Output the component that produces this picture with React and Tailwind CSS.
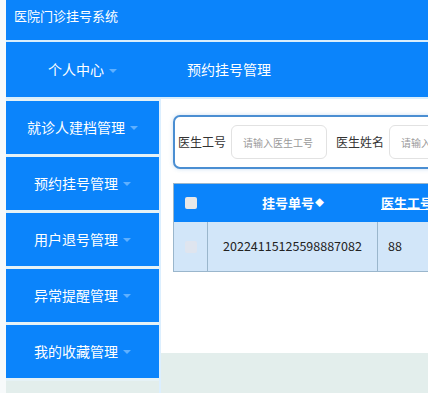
import React from 'react';

const font = { fontFamily: '"Microsoft YaHei", "Noto Sans CJK SC", "Noto Sans", sans-serif' };

const Caret = () => (
  <span className="ml-[5px] inline-block w-0 h-0 border-l-[4px] border-r-[4px] border-t-[4px] border-l-transparent border-r-transparent border-t-[#5fb0ff] align-middle" />
);

const menus = ['就诊人建档管理', '预约挂号管理', '用户退号管理', '异常提醒管理', '我的收藏管理'];

export default function App() {
  return (
    <div className="w-[428px] h-[393px] overflow-hidden flex bg-[#f4f8f9]" style={font}>
      {/* faint strip on the left edge */}
      <div className="w-[6px] shrink-0 bg-[#f7fafb]" />

      <div className="flex-1 flex flex-col bg-[#d9eefc] gap-[2px]">
        <div className="h-[40px] shrink-0 bg-[#0b84fb] pl-[8px] pt-[6px] text-white text-[13px]">
          医院门诊挂号系统
        </div>

        <div className="h-[55px] shrink-0 bg-[#0b84fb] flex items-center text-white text-[14px]">
          <div className="w-[153px] text-center">
            个人中心<Caret />
          </div>
          <div className="ml-[28px]">预约挂号管理</div>
        </div>

        <div className="flex-1 flex min-h-0">
          <div className="w-[153px] shrink-0 flex flex-col gap-[3px] pt-[2px] bg-[#e6f2f6]">
            {menus.map((m) => (
              <div key={m} className="h-[53px] shrink-0 bg-[#0b84fb] flex items-center justify-center text-white text-[14px]">
                {m}<Caret />
              </div>
            ))}
            <div className="flex-1 bg-[#e3eeec]" />
          </div>

          <div className="flex-1 flex flex-col bg-white border-l-2 border-[#dcefff] min-w-0">
            <div className="flex-1 pl-[12px] pt-[16px] overflow-hidden">
              <div className="h-[54px] w-[300px] border-2 border-[#4a8ed2] rounded-[7px] bg-white flex items-center pl-[3px] shadow-[0_0_4px_rgba(74,142,210,0.3)]">
                <span className="text-[12px] text-[#333] whitespace-nowrap">医生工号</span>
                <div className="ml-[5px] w-[96px] h-[34px] shrink-0 border border-[#e2e2e2] rounded-[6px] flex items-center pl-[11px] text-[10px] text-[#9a9a9a] whitespace-nowrap">
                  请输入医生工号
                </div>
                <span className="ml-[9px] text-[12px] text-[#333] whitespace-nowrap">医生姓名</span>
                <div className="ml-[5px] w-[96px] h-[34px] shrink-0 border border-[#e2e2e2] rounded-[6px] flex items-center pl-[11px] text-[10px] text-[#9a9a9a] whitespace-nowrap">
                  请输入医生姓名
                </div>
              </div>

              <div className="mt-[14px] w-[320px] border border-[#9ab6cc]">
                <div className="h-[38px] flex bg-[#0b84fb] text-white text-[13px] font-bold">
                  <div className="w-[34px] shrink-0 flex items-center justify-center">
                    <span className="w-[12px] h-[12px] bg-[#e8e8e8] rounded-[2px]" />
                  </div>
                  <div className="w-[170px] shrink-0 flex items-center justify-center">
                    挂号单号<span className="text-[9px] ml-[1px]">◆</span>
                  </div>
                  <div className="flex-1 flex items-center pl-[3px] underline whitespace-nowrap">医生工号</div>
                </div>
                <div className="h-[49px] flex bg-[#d2e6f9] text-[12.5px] text-[#222]">
                  <div className="w-[34px] shrink-0 flex items-center justify-center border-r border-[#9ab6cc]">
                    <span className="w-[12px] h-[12px] bg-[#ece4e6] rounded-[2px] opacity-50" />
                  </div>
                  <div className="w-[170px] shrink-0 flex items-center justify-center border-r border-[#9ab6cc]">
                    20224115125598887082
                  </div>
                  <div className="flex-1 flex items-center pl-[10px]">88</div>
                </div>
              </div>
            </div>
            <div className="h-[40px] shrink-0 bg-[#e3eeec]" />
          </div>
        </div>
      </div>
    </div>
  );
}
